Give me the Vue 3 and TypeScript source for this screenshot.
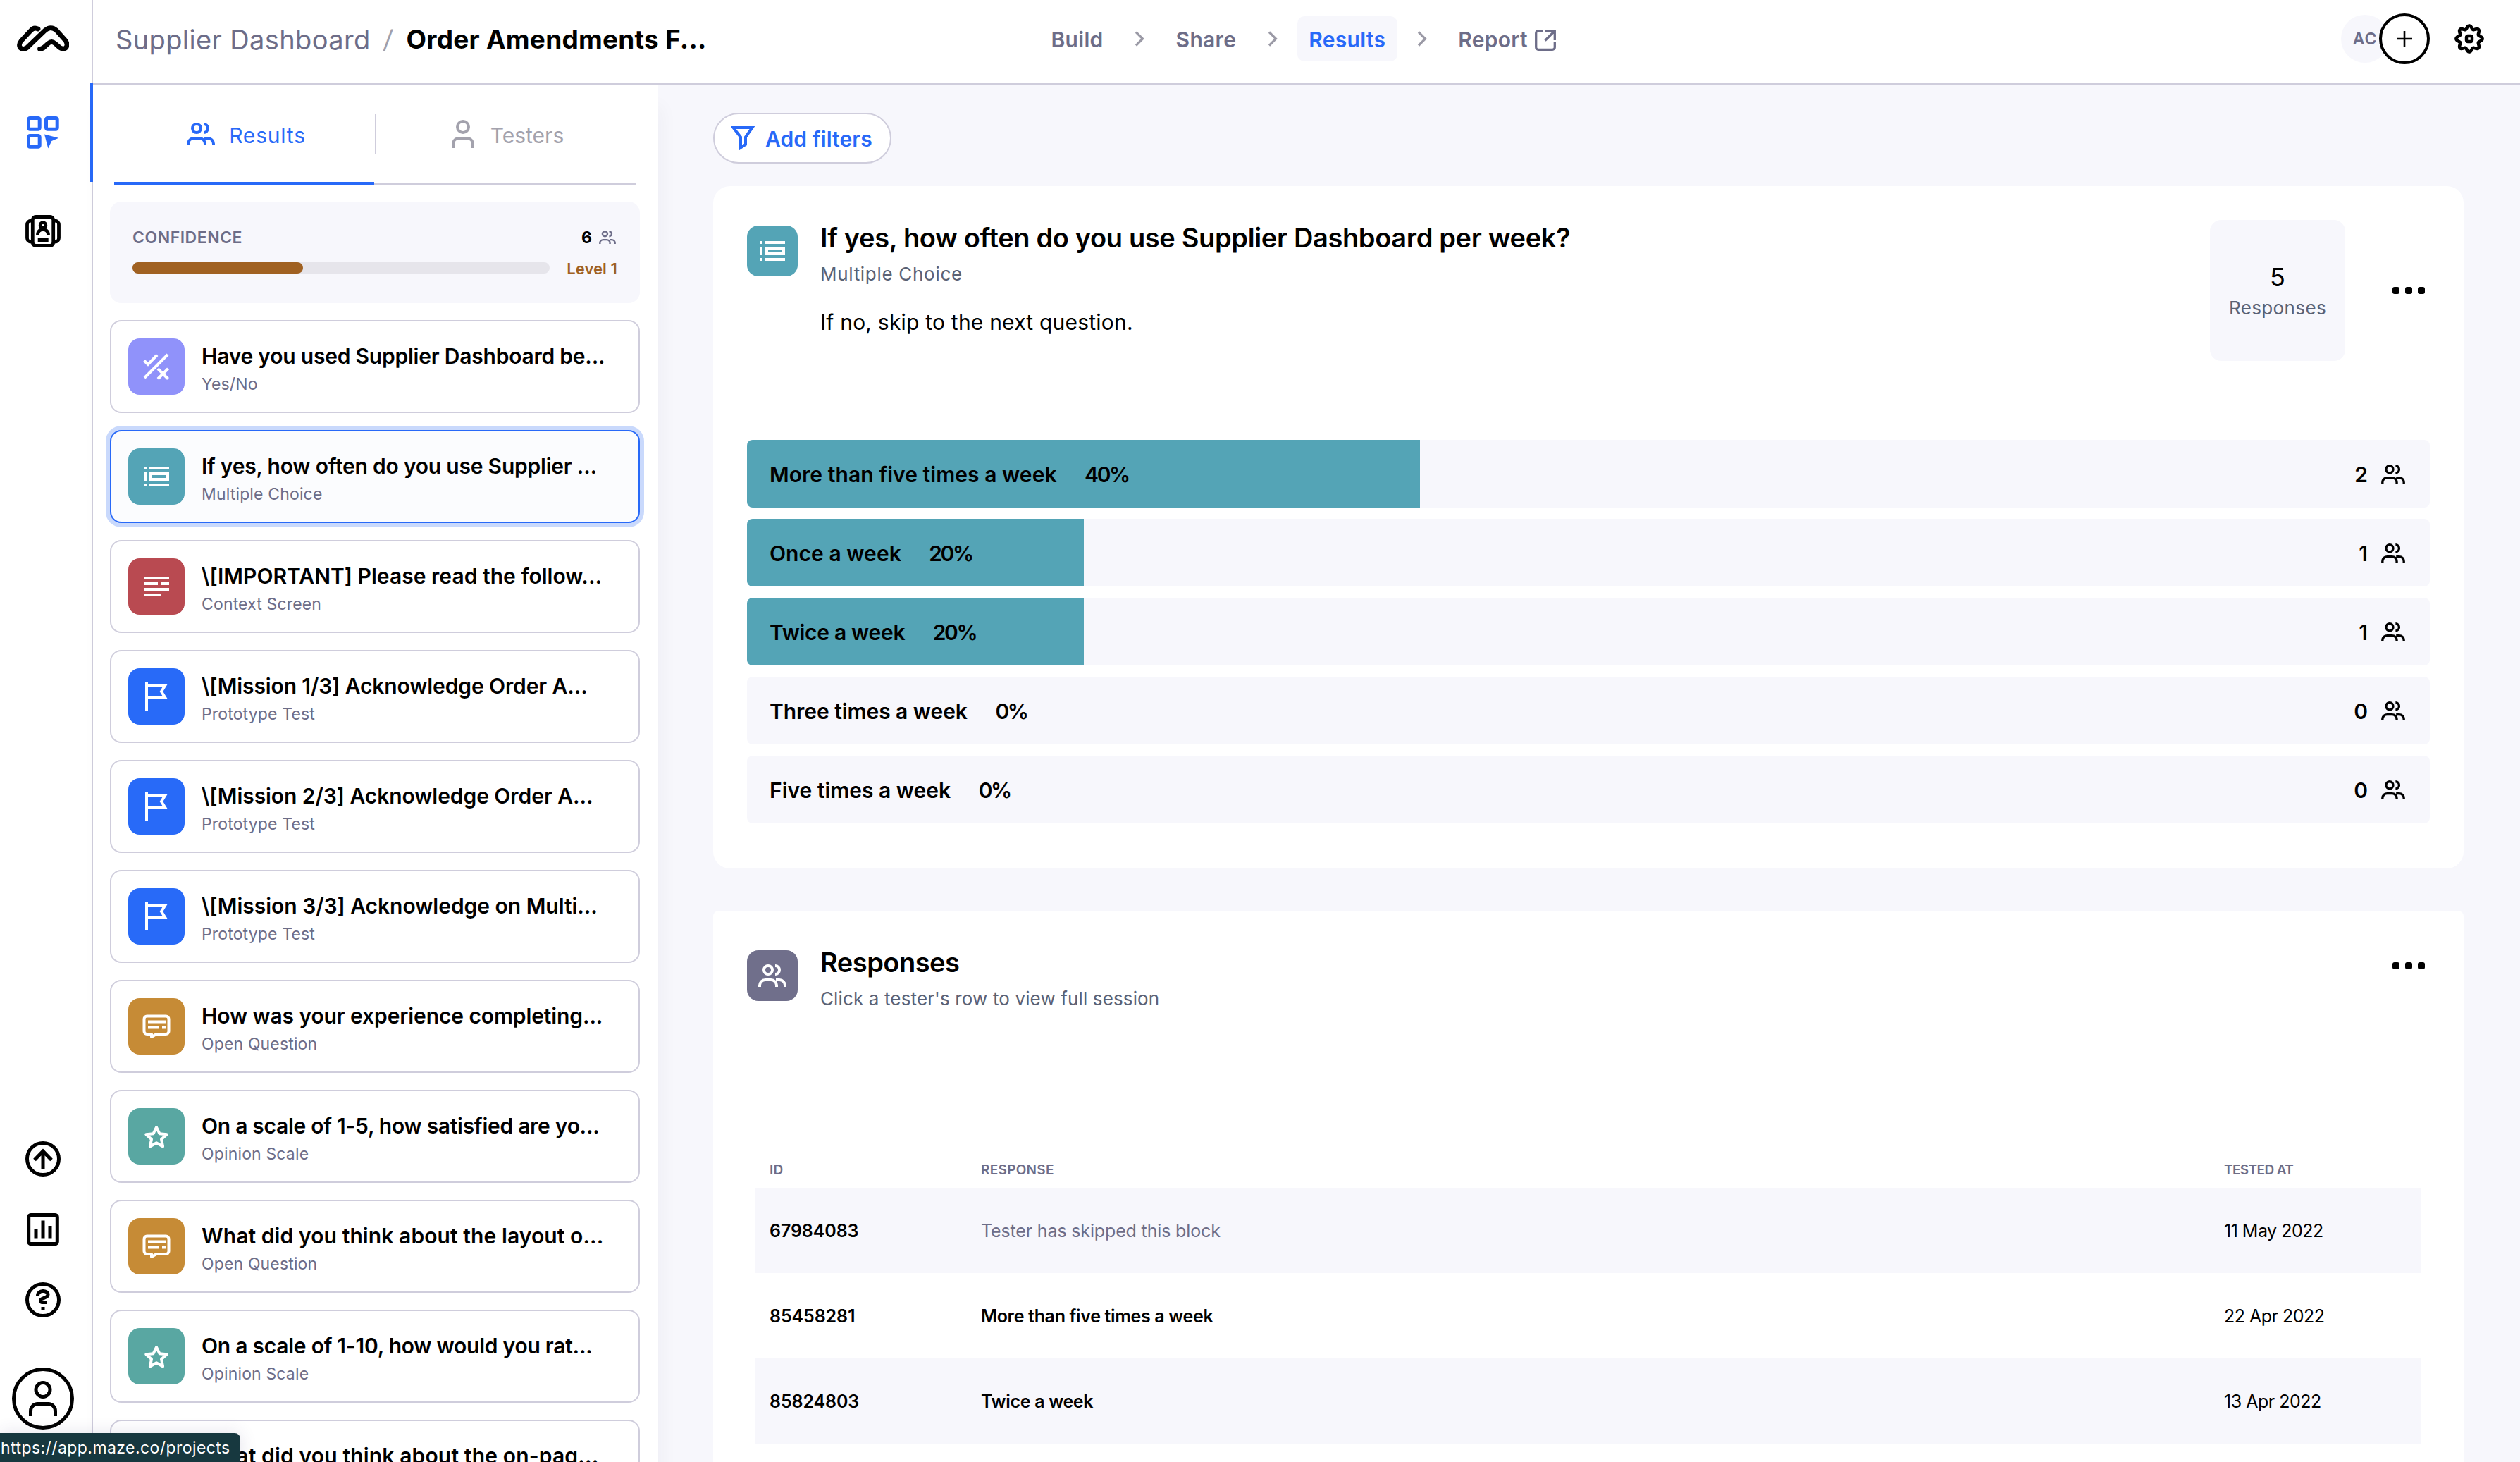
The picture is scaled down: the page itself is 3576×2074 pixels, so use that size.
<script setup lang="ts">
interface Block { title: string; type: string; icon: string; color: string; tracking: number; active?: boolean }
interface Choice { label: string; pct: number; count: number; tracking: number }
interface Row { id: string; response: string; skipped?: boolean; date: string }

const blocks: Block[] = [
  { title: 'Have you used Supplier Dashboard be...', type: 'Yes/No', icon: 'yesno', color: '#9092fa', tracking: -0.22 },
  { title: 'If yes, how often do you use Supplier ...', type: 'Multiple Choice', icon: 'choice', color: '#54a4b6', tracking: -0.22, active: true },
  { title: '\\[IMPORTANT] Please read the follow...', type: 'Context Screen', icon: 'context', color: '#b94a51', tracking: 0.03 },
  { title: '\\[Mission 1/3] Acknowledge Order A...', type: 'Prototype Test', icon: 'flag', color: '#286af8', tracking: -0.11 },
  { title: '\\[Mission 2/3] Acknowledge Order A...', type: 'Prototype Test', icon: 'flag', color: '#286af8', tracking: -0.06 },
  { title: '\\[Mission 3/3] Acknowledge on Multi...', type: 'Prototype Test', icon: 'flag', color: '#286af8', tracking: -0.03 },
  { title: 'How was your experience completing...', type: 'Open Question', icon: 'open', color: '#c68b36', tracking: -0.11 },
  { title: 'On a scale of 1-5, how satisfied are yo...', type: 'Opinion Scale', icon: 'star', color: '#59a7a2', tracking: -0.28 },
  { title: 'What did you think about the layout o...', type: 'Open Question', icon: 'open', color: '#c68b36', tracking: 0.09 },
  { title: 'On a scale of 1-10, how would you rat...', type: 'Opinion Scale', icon: 'star', color: '#59a7a2', tracking: -0.25 },
  { title: 'What did you think about the on-pag...', type: 'Open Question', icon: 'open', color: '#c68b36', tracking: 0.15 },
]

const choices: Choice[] = [
  { label: 'More than five times a week', pct: 40, count: 2, tracking: 0.06 },
  { label: 'Once a week', pct: 20, count: 1, tracking: 0.05 },
  { label: 'Twice a week', pct: 20, count: 1, tracking: -0.3 },
  { label: 'Three times a week', pct: 0, count: 0, tracking: -0.05 },
  { label: 'Five times a week', pct: 0, count: 0, tracking: 0 },
]

const rows: Row[] = [
  { id: '67984083', response: 'Tester has skipped this block', skipped: true, date: '11 May 2022' },
  { id: '85458281', response: 'More than five times a week', date: '22 Apr 2022' },
  { id: '85824803', response: 'Twice a week', date: '13 Apr 2022' },
]

// Eight-lobed outline of the settings gear.
const gear = Array.from({ length: 120 }, (_, i) => {
  const a = (i / 120) * Math.PI * 2
  const r = 16.3 + 2.3 * Math.cos(8 * a)
  return `${i ? 'L' : 'M'}${(21 + r * Math.cos(a)).toFixed(2)} ${(21 + r * Math.sin(a)).toFixed(2)}`
}).join('') + 'Z'
</script>

<template>
  <div class="app">
    <svg class="defs" width="0" height="0" aria-hidden="true">
      <symbol id="i-users" viewBox="0 0 40 32"><g fill="none" stroke="currentColor" stroke-width="4"><circle cx="14" cy="8" r="6" /><path d="M2 32v-2a8 8 0 0 1 8-8h8a8 8 0 0 1 8 8v2M24 2a6 6 0 0 1 0 12M25 22h5a8 8 0 0 1 8 8v2" /></g></symbol>
      <symbol id="i-user" viewBox="0 0 32 40"><g fill="none" stroke="currentColor" stroke-width="4"><circle cx="16" cy="10" r="8" /><path d="M2 40v-6a8 8 0 0 1 8-8h12a8 8 0 0 1 8 8v6" /></g></symbol>
      <symbol id="i-chevron" viewBox="0 0 14 22"><path d="M2 1.5 11.5 11 2 20.5" fill="none" stroke="currentColor" stroke-width="3.2" /></symbol>
      <symbol id="i-yesno" viewBox="20 20 40 40"><path d="M22.5 31.5 28 37 41 23.5M23 56 56 23M42 43 56.5 57.5M56.5 43 42 57.5" fill="none" stroke="currentColor" stroke-width="4" /></symbol>
      <symbol id="i-choice" viewBox="20 20 40 40"><path d="M22 26h4v4h-4zM30 26h28v4H30zM22 34h4v12h-4zM22 50h4v4h-4zM30 50h28v4H30zM30 34h28v12H30zm4 4v4h20v-4z" fill="currentColor" fill-rule="evenodd" /></symbol>
      <symbol id="i-context" viewBox="20 20 40 40"><path d="M22 26h36v4H22zM22 34h20v4H22zM46 34h12v4H46zM22 42h36v4H22zM22 50h24v4H22z" fill="currentColor" /></symbol>
      <symbol id="i-flag" viewBox="20 20 40 40"><path d="M26 20v40M26 24h26.5L47 33l5.500 9H26" fill="none" stroke="currentColor" stroke-width="4" /></symbol>
      <symbol id="i-open" viewBox="20 20 40 40"><path d="M26.500 25.500h27a4 4 0 0 1 4 4V47a4 4 0 0 1-4 4H40l-7 4v-4h-6.500a4 4 0 0 1-4-4V29.500a4 4 0 0 1 4-4z" fill="none" stroke="currentColor" stroke-width="4" stroke-linejoin="round" /><path d="M28 31.500h25v4H28zM28 39.500h16v4H28zM48 39.500h5v4h-5z" fill="currentColor" /></symbol>
      <symbol id="i-star" viewBox="20 20 40 40"><path d="m40 27 4.400 9.200 10.300 1-7.700 7 2.100 10.300-9.100-5.200-9.100 5.200 2.100-10.300-7.700-7 10.300-1z" fill="none" stroke="currentColor" stroke-width="4" stroke-linejoin="round" /></symbol>
    </svg>

    <nav class="rail">
      <div class="logo">
        <svg width="74" height="37" viewBox="0 0 74 37"><path d="M30 5C26 3 22.500 4 20 7L6 22c-4 5-3 10 2 11.300 4 .7 6.500-1.300 9-4.300L40 7c5-4.500 11-4.500 16 0l12.500 14c4 5 3 11-1.500 12-5 1-7-2-9.500-4.500L54 25.500c-3-2.500-6.500-2.500-9.500 0L39 30.500c-2 2-4 3-6.500 2.800" fill="none" stroke="#000" stroke-width="6.800" stroke-linecap="round" stroke-linejoin="round" /></svg>
      </div>
      <div class="rail-item active">
        <svg width="46" height="46" viewBox="0 0 46 46"><g fill="none" stroke="currentColor" stroke-width="5"><rect x="2.500" y="2.500" width="15.700" height="15.700" rx="2" /><rect x="27.500" y="2.500" width="15.700" height="15.700" rx="2" /><rect x="2.500" y="27.500" width="15.700" height="15.700" rx="2" /></g><path d="m25 25.500 20.300 5.200-10 4.300-5 10.500z" fill="currentColor" /></svg>
      </div>
      <div class="rail-item">
        <svg width="50" height="46" viewBox="0 0 50 46"><g fill="none" stroke="currentColor" stroke-width="4.800"><rect x="10.300" y="2.500" width="29.400" height="41" rx="4.500" /><path d="M10 8.200H8a5.500 5.500 0 0 0-5.500 5.500v19A5.500 5.500 0 0 0 8 38.200h2M40 8.200h2a5.500 5.500 0 0 1 5.500 5.500v19a5.500 5.500 0 0 1-5.500 5.500h-2" /><circle cx="25" cy="14.500" r="3.800" /><path d="M17.500 28c0-10 15-10 15 0" /></g><path d="M17.700 33h15v5h-15z" fill="currentColor" /></svg>
      </div>
      <div class="rail-bottom">
        <svg width="50" height="50" viewBox="0 0 50 50"><g fill="none" stroke="currentColor" stroke-width="5"><circle cx="25" cy="25" r="22.500" /><path d="M25 40V14M13 26.500 25 14l12 12.500" /></g></svg>
        <svg width="50" height="50" viewBox="0 0 50 50"><rect x="4.700" y="4.500" width="40.600" height="41" rx="3" fill="none" stroke="currentColor" stroke-width="5" /><path d="M12.500 25h5v12.500h-5zM22.500 12.500h5v25h-5zM32.500 20h5v17.500h-5z" fill="currentColor" /></svg>
        <svg width="50" height="50" viewBox="0 0 50 50"><g fill="none" stroke="currentColor" stroke-width="5"><circle cx="25" cy="25" r="22.500" /><path d="M17.500 19c0-8.500 14.500-8.500 14.500-1.500 0 5.500-10.500 4-10.500 8.500 0 1.800 1 2.500 3 2.500h5.500" /></g><path d="M22.500 35h5v5h-5z" fill="currentColor" /></svg>
        <div class="avatar"><svg width="40" height="50"><use href="#i-user" /></svg></div>
      </div>
    </nav>

    <div class="page">
      <header class="top">
        <div class="crumbs">
          <span class="crumb">Supplier Dashboard</span><span class="slash">/</span><span class="current">Order Amendments F...</span>
        </div>
        <div class="steps">
          <span class="step">Build</span>
          <svg class="chev"><use href="#i-chevron" /></svg>
          <span class="step">Share</span>
          <svg class="chev"><use href="#i-chevron" /></svg>
          <span class="step on">Results</span>
          <svg class="chev"><use href="#i-chevron" /></svg>
          <span class="step">Report
            <svg width="30" height="30" viewBox="0 0 30 30"><path d="M12 1.700H5A3.300 3.300 0 0 0 1.700 5v20A3.300 3.300 0 0 0 5 28.300h20a3.300 3.300 0 0 0 3.300-3.300v-7M15 1.700h13.300V15M28 2 14.500 15.500" fill="none" stroke="currentColor" stroke-width="3.300" /></svg>
          </span>
        </div>
        <div class="account">
          <span class="initials">AC</span>
          <span class="plus"><svg width="22" height="22" viewBox="0 0 22 22"><path d="M11 0v22M0 11h22" stroke="#000" stroke-width="2.600" /></svg></span>
          <svg width="42" height="42" viewBox="0 0 42 42"><path :d="gear" fill="none" stroke="#000" stroke-width="4.600" stroke-linejoin="round" /><rect x="17" y="17" width="8" height="8" rx="2" fill="none" stroke="#000" stroke-width="4.400" /></svg>
        </div>
      </header>

      <div class="body">
        <aside class="pane">
          <div class="tabs">
            <div class="tab on"><svg width="40" height="32"><use href="#i-users" /></svg><span class="t-results">Results</span></div>
            <i class="split"></i>
            <div class="tab"><svg width="32" height="40"><use href="#i-user" /></svg><span>Testers</span></div>
          </div>

          <div class="confidence">
            <div class="conf-head">
              <span class="conf-label">CONFIDENCE</span>
              <span class="conf-count">6</span>
              <svg width="24" height="19"><use href="#i-users" /></svg>
            </div>
            <div class="conf-row">
              <div class="track"><div class="fill" :style="{ width: '40.800%' }"></div></div>
              <span class="level">Level 1</span>
            </div>
          </div>

          <div v-for="b in blocks" :key="b.title" class="block" :class="{ active: b.active }">
            <div class="tile" :style="{ background: b.color }"><svg width="40" height="40"><use :href="'#i-' + b.icon" /></svg></div>
            <div class="block-text">
              <div class="block-title" :style="{ letterSpacing: b.tracking + 'px' }">{{ b.title }}</div>
              <div class="block-type">{{ b.type }}</div>
            </div>
          </div>
        </aside>

        <main class="main">
          <button class="filters">
            <svg width="34" height="34" viewBox="0 0 34 34"><path d="M3.500 2h27L21 15.500V26l-7 4.500v-15z" fill="none" stroke="currentColor" stroke-width="4" /></svg>
            <span>Add filters</span>
          </button>

          <section class="card question">
            <div class="head">
              <div class="tile small teal"><svg width="40" height="40"><use href="#i-choice" /></svg></div>
              <div class="head-text">
                <h2 class="q-title">If yes, how often do you use Supplier Dashboard per week?</h2>
                <div class="sub q-sub">Multiple Choice</div>
                <p>If no, skip to the next question.</p>
              </div>
              <div class="stat"><span class="stat-num">5</span><span class="stat-label">Responses</span></div>
              <div class="dots"><i></i><i></i><i></i></div>
            </div>
            <div class="choices">
              <div v-for="c in choices" :key="c.label" class="choice">
                <div class="bar" :style="{ width: c.pct + '%' }"></div>
                <span class="label" :style="{ letterSpacing: c.tracking + 'px' }">{{ c.label }}</span>
                <span class="pct">{{ c.pct }}%</span>
                <span class="count">{{ c.count }}</span>
                <svg width="34" height="27"><use href="#i-users" /></svg>
              </div>
            </div>
          </section>

          <section class="card responses">
            <div class="head">
              <div class="tile small slate"><svg width="40" height="32"><use href="#i-users" /></svg></div>
              <div class="head-text">
                <h2>Responses</h2>
                <div class="sub">Click a tester's row to view full session</div>
              </div>
              <div class="dots"><i></i><i></i><i></i></div>
            </div>
            <div class="table">
              <div class="tr th"><span>ID</span><span>RESPONSE</span><span class="th-date">TESTED AT</span></div>
              <div v-for="r in rows" :key="r.id" class="tr">
                <span class="id">{{ r.id }}</span>
                <span :class="r.skipped ? 'skipped' : 'answer'">{{ r.response }}</span>
                <span class="date">{{ r.date }}</span>
              </div>
            </div>
          </section>
        </main>
      </div>
    </div>

    <div class="status">https://app.maze.co/projects</div>
  </div>
</template>

<style>
html, body { margin: 0; overflow: hidden; }
</style>

<style scoped>
.app { position: relative; display: flex; width: 3576px; height: 2074px; overflow: hidden; background: #fff; color: #000; font-family: Inter, "Liberation Sans", sans-serif; }
.app * { box-sizing: border-box; }
svg { display: block; flex: none; }
.defs { position: absolute; }
h2, p { margin: 0; }

.rail { flex: none; width: 132px; height: 2074px; border-right: 2px solid #cfcddc; display: flex; flex-direction: column; }
.logo { height: 118px; padding: 36px 0 0 24px; }
.rail-item { position: relative; height: 140px; width: 122px; display: flex; align-items: center; justify-content: center; }
.rail-item.active { color: #2869f8; }
.rail-item.active::after { content: ""; position: absolute; top: 0; right: -10px; width: 4px; height: 140px; background: #2869f8; }
.rail-bottom { margin-top: auto; width: 122px; padding-bottom: 46px; display: flex; flex-direction: column; align-items: center; gap: 50px; }
.avatar { width: 88px; height: 88px; margin-top: 21px; border: 5px solid #000; border-radius: 50%; display: flex; align-items: center; justify-content: center; }

.page { flex: 1; min-width: 0; display: flex; flex-direction: column; }
.top { flex: none; height: 120px; padding: 0 51px 8px 32px; border-bottom: 2px solid #cfcddc; display: flex; align-items: center; }
.crumbs { flex: 0 0 1311px; display: flex; align-items: center; white-space: nowrap; }
.crumb { font-size: 38px; letter-spacing: 0.37px; color: #6d6d88; margin-top: 2px; }
.slash { font-size: 36px; color: #a09fab; margin: 2px 20px 0 18px; transform: skewX(-6deg); }
.current { font-size: 37px; font-weight: 650; letter-spacing: 0.25px; }
.steps { display: flex; align-items: center; gap: 28px; }
.step { height: 64px; padding: 2px 16.500px 0; border-radius: 10px; display: flex; align-items: center; gap: 10px; font-size: 30px; font-weight: 600; letter-spacing: 0.3px; color: #6d6d88; }
.step.on { background: #f7f7fc; color: #2869f8; }
.step svg { margin-top: 2px; }
.chev { width: 14px; height: 22px; color: #9b9aa6; }
.account { margin-left: auto; display: flex; align-items: center; }
.initials { width: 68px; height: 68px; margin-right: -14px; border-radius: 50%; background: #f7f7fc; color: #6d6d88; font-size: 23px; font-weight: 600; letter-spacing: 0.8px; display: flex; align-items: center; justify-content: center; }
.plus { position: relative; width: 72px; height: 72px; margin-right: 35px; border: 4px solid #000; border-radius: 50%; background: #fff; display: flex; align-items: center; justify-content: center; }

.body { flex: 1; min-height: 0; display: flex; }
.pane { position: relative; flex: none; width: 802px; padding: 0 26px 0 24px; background: #fff; box-shadow: 6px 30px 24px rgba(20, 20, 60, 0.035); }
.tabs { height: 142px; margin: 0 6px; display: flex; align-items: stretch; position: relative; }
.tab { flex: 1; display: flex; align-items: center; justify-content: center; gap: 20px; padding: 3px 0 0 6px; font-size: 30px; color: #a3a2ad; border-bottom: 2px solid #cfcddc; }
.tab.on { color: #2869f8; padding-top: 5px; border-bottom: 4px solid #2869f8; }
.t-results { letter-spacing: 0.8px; }
.tab > svg { margin-top: -3px; }
.tab:not(.on) { gap: 23px; padding-left: 8px; }
.split { position: absolute; left: 370px; top: 42px; width: 2px; height: 56px; background: #cfcddc; }

.confidence { height: 144px; margin-top: 24px; padding: 35px 32px 0 32px; border-radius: 16px; background: #f7f7fc; }
.conf-head { display: flex; align-items: center; height: 31px; }
.conf-label { font-size: 23px; font-weight: 600; letter-spacing: 0.52px; color: #6d6d88; flex: 1; }
.conf-count { font-size: 23px; font-weight: 700; margin-right: 10px; }
.conf-head svg { color: #6d6d88; margin-right: 2px; }
.conf-row { display: flex; align-items: center; height: 28px; margin-top: 14px; }
.track { width: 593px; height: 16px; margin-right: 24px; border-radius: 8px; background: #e6e5eb; }
.fill { height: 16px; border-radius: 8px; background: #a06122; }
.level { margin-top: 1px; font-size: 22px; font-weight: 600; letter-spacing: 0.1px; color: #a06122; white-space: nowrap; }

.block { height: 132px; margin-top: 24px; padding: 24px; border: 2px solid #cfcddc; border-radius: 16px; display: flex; background: #fff; }
.block.active { border-color: #2869f8; background: #fbfcfe; box-shadow: 0 0 0 6px #c9d9fc; }
.tile { flex: none; width: 80px; height: 80px; border-radius: 16px; color: #fff; display: flex; align-items: center; justify-content: center; }
.block-text { margin: 5px 0 0 24px; white-space: nowrap; }
.block-title { font-size: 30px; font-weight: 600; line-height: 41px; }
.block-type { margin-top: 5px; font-size: 23px; line-height: 28px; letter-spacing: 0.15px; color: #6d6d88; }

.main { flex: 1; min-width: 0; padding: 40px 80px 0 78px; background: #f7f7fc; }
.filters { height: 72px; width: 253px; padding: 0 0 0 23px; border: 2px solid #cfcddc; border-radius: 36px; background: #fff; color: #2869f8; font: 600 30px Inter, "Liberation Sans", sans-serif; display: flex; align-items: center; gap: 15px; white-space: nowrap; }
.filters span { margin-top: 2px; letter-spacing: 0.1px; }
.card { background: #fff; }
.question { height: 968px; margin-top: 32px; padding: 48px 48px 0; border-radius: 24px; }
.head { display: flex; align-items: flex-start; }
.question .head { height: 312px; }
.tile.small { width: 72px; height: 72px; margin-top: 8px; }
.teal { background: #54a4b6; }
.slate { background: #706f8b; }
.head-text { flex: 1; margin-left: 32px; padding-top: 1px; }
h2 { font-size: 38px; font-weight: 600; line-height: 48px; letter-spacing: -0.5px; }
.q-title { letter-spacing: -0.36px; }
.sub { margin-top: 11px; font-size: 26px; line-height: 34px; letter-spacing: 0.13px; color: #5b6275; }
.q-sub { letter-spacing: 0.7px; }
.head-text p { margin-top: 31px; font-size: 30px; line-height: 40px; letter-spacing: 0.21px; }
.stat { width: 192px; height: 200px; border-radius: 16px; background: #f7f7fc; display: flex; flex-direction: column; align-items: center; padding-top: 59px; }
.stat-num { font-size: 36px; line-height: 44px; }
.stat-label { margin-top: 5px; font-size: 26px; line-height: 34px; letter-spacing: 0.38px; color: #5b6275; }
.dots { display: flex; gap: 8px; margin-right: 7px; }
.dots i { width: 10px; height: 10px; border-radius: 3px; background: #000; }
.question .dots { margin: 95px 7px 0 67px; }
.choices { display: flex; flex-direction: column; gap: 16px; }
.choice { position: relative; height: 96px; padding: 1px 35px 0 32px; border-radius: 8px; background: #f7f7fc; overflow: hidden; display: flex; align-items: center; font-size: 30px; font-weight: 600; }
.bar { position: absolute; left: 0; top: 0; bottom: 0; background: #54a4b6; }
.label, .pct { position: relative; white-space: nowrap; }
.pct { margin-left: 39.500px; letter-spacing: -2.4px; }
.count { margin-left: auto; margin-right: 19px; }

.responses { height: 860px; margin-top: 60px; padding: 48px 48px 0; border-radius: 8px 8px 0 0; }
.responses .head { height: 293px; }
.responses .dots { margin-top: 25px; }
.table { margin: 0 12px; }
.tr { display: grid; grid-template-columns: 300px 1764px 1fr; align-items: center; height: 121px; padding-left: 20px; font-size: 25px; }
.tr:nth-child(even) { background: #f7f7fc; }
.th { height: 52px; font-size: 19px; font-weight: 600; letter-spacing: 0.3px; color: #6d6d88; }
.th-date { letter-spacing: -0.6px; }
.id, .answer { font-weight: 600; }
.id { letter-spacing: -0.1px; }
.answer { letter-spacing: -0.33px; }
.skipped { color: #6d6d88; letter-spacing: -0.15px; }
.date { letter-spacing: -0.5px; }

.status { position: absolute; left: 0; bottom: 0; width: 341px; height: 41px; padding: 1px 0 0 1px; border-radius: 0 8px 0 0; background: #17383f; color: #fff; font-size: 23px; line-height: 41px; letter-spacing: 0.43px; white-space: nowrap; box-shadow: 0 0 24px rgba(60, 50, 110, 0.14); }
</style>
